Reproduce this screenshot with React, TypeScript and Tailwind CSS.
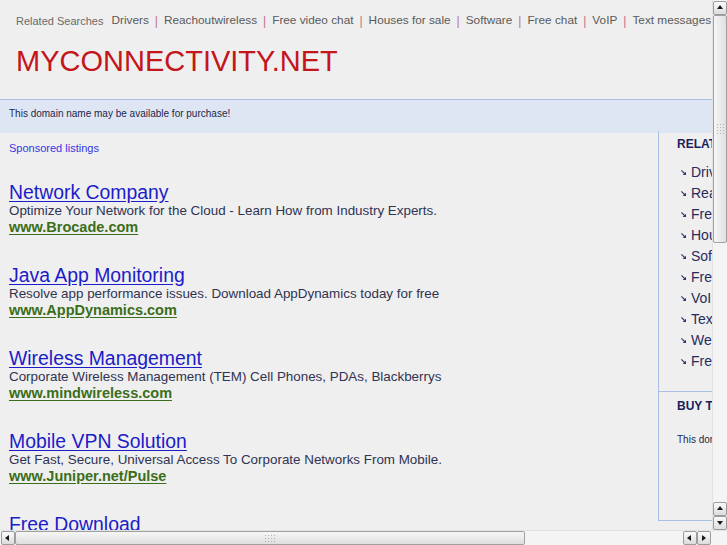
import React from "react";

const related = [
	"Drivers",
	"Reachoutwireless",
	"Free video chat",
	"Houses for sale",
	"Software",
	"Free chat",
	"VoIP",
	"Text messages",
	"Web hosting",
	"Free downloads",
];

const ads = [
	{
		title: "Network Company",
		desc: "Optimize Your Network for the Cloud - Learn How from Industry Experts.",
		url: "www.Brocade.com",
	},
	{
		title: "Java App Monitoring",
		desc: "Resolve app performance issues. Download AppDynamics today for free",
		url: "www.AppDynamics.com",
	},
	{
		title: "Wireless Management",
		desc: "Corporate Wireless Management (TEM) Cell Phones, PDAs, Blackberrys",
		url: "www.mindwireless.com",
	},
	{
		title: "Mobile VPN Solution",
		desc: "Get Fast, Secure, Universal Access To Corporate Networks From Mobile.",
		url: "www.Juniper.net/Pulse",
	},
	{
		title: "Free Download",
		desc: "Download free software for your PC today",
		url: "www.download.com",
	},
];

// little arrow button used by both scrollbars
function ArrowButton({ dir }: { dir: "up" | "down" | "left" | "right" }) {
	const points = {
		up: "2,6 8,6 5,2",
		down: "2,3 8,3 5,7",
		left: "6,2 6,8 2,5",
		right: "3,2 3,8 7,5",
	}[dir];
	return (
		<div className="w-[14px] h-[14px] flex items-center justify-center rounded-[2px] border border-[#9c9c9c] bg-gradient-to-b from-[#fbfbfb] to-[#dcdcdc]">
			<svg width="10" height="10" viewBox="0 0 10 10">
				<polygon points={points} fill="#1a1a1a" />
			</svg>
		</div>
	);
}

function Grip({ vertical }: { vertical: boolean }) {
	const dots = [];
	for (let i = 0; i < 4; i++) {
		for (let j = 0; j < 3; j++) {
			dots.push(
				<span key={`${i}-${j}`} className="w-[1px] h-[1px] bg-[#b0b0b0]" />
			);
		}
	}
	return (
		<div
			className={`grid gap-[2px] ${
				vertical ? "grid-cols-3" : "grid-cols-4 grid-flow-col grid-rows-3"
			}`}
		>
			{dots}
		</div>
	);
}

function BulletArrow() {
	return (
		<svg width="5" height="5" viewBox="0 0 6 6" className="shrink-0">
			<path d="M0.5 0.5 L4.5 4.5" stroke="#2a3470" strokeWidth="1.3" />
			<polygon points="6,2 6,6 2,6" fill="#2a3470" />
		</svg>
	);
}

export default function App() {
	return (
		<div
			className="w-[727px] h-[545px] flex flex-col overflow-hidden bg-[#efefef]"
			style={{ fontFamily: '"Liberation Sans", Arial, sans-serif' }}
		>
			<div className="flex flex-1 min-h-0">
				{/* page */}
				<div className="flex-1 min-w-0 overflow-hidden">
					<div className="w-[900px]">
						{/* header */}
						<div className="h-[100px] border-b border-[#a9bfe6] pl-[16px] pt-[13px]">
							<div className="flex items-center h-[16px] whitespace-nowrap">
								<span className="text-[11px] text-[#6a6a6a] mr-[8px]">
									Related Searches
								</span>
								{related.slice(0, 8).map((r, i) => (
									<span key={r} className="flex items-center">
										{i > 0 && (
											<span className="text-[12px] text-[#c0708c] mx-[6px]">|</span>
										)}
										<span className="text-[11.8px] text-[#5a5a5a]">{r}</span>
									</span>
								))}
							</div>
							<div className="mt-[18px] text-[29px] leading-[29px] text-[#c4151b]">
								MYCONNECTIVITY.NET
							</div>
						</div>

						{/* availability band */}
						<div className="h-[33px] bg-[#dee6f4] pl-[9px] pt-[8px] text-[10px] leading-[12px] text-[#22264a]">
							This domain name may be available for purchase!
						</div>

						<div className="flex">
							{/* listings */}
							<div className="w-[658px] shrink-0 pl-[9px]">
								<div className="pt-[8px] text-[11px] leading-[14px] text-[#3535e6]">
									Sponsored listings
								</div>
								<div className="mt-[27px] flex flex-col gap-[29px]">
									{ads.map((ad) => (
										<div key={ad.title}>
											<div className="text-[19.4px] leading-[20px] text-[#1c1cc8] underline underline-offset-[2px]">
												{ad.title}
											</div>
											<div className="text-[13.4px] leading-[17px] text-[#303352]">
												{ad.desc}
											</div>
											<div className="text-[14.5px] leading-[17px] font-bold text-[#3b6e19] underline underline-offset-[2px]">
												{ad.url}
											</div>
										</div>
									))}
								</div>
							</div>

							{/* right box */}
							<div className="w-[220px] h-[390px] shrink-0 border-l border-b border-r border-[#a9bfe6] -mt-[2px]">
								<div className="pl-[18px] pt-[6px] pb-[19px]">
									<div className="text-[12px] leading-[14px] font-bold text-[#1b1f5c]">
										RELATED SEARCHES
									</div>
									<div className="mt-[11px] flex flex-col">
										{related.map((r) => (
											<div key={r} className="h-[21px] flex items-center gap-[5px] pl-[4px]">
												<BulletArrow />
												<span className="text-[14px] text-[#262b5e]">{r}</span>
											</div>
										))}
									</div>
								</div>
								<div className="border-t border-[#a9bfe6] pl-[18px] pt-[7px]">
									<div className="text-[12px] leading-[14px] font-bold text-[#1b1f5c]">
										BUY THIS DOMAIN
									</div>
									<div className="mt-[21px] text-[10px] leading-[12px] text-[#22264a]">
										This domain may be for sale.
									</div>
								</div>
							</div>
						</div>
					</div>
				</div>

				{/* vertical scrollbar */}
				<div className="w-[15px] shrink-0 flex flex-col items-center bg-[#f4f4f4] border-l border-[#e2e2e2] pt-[1px]">
					<ArrowButton dir="up" />
					<div className="w-[14px] h-[228px] rounded-[2px] border border-[#a0a0a0] bg-gradient-to-r from-[#f6f6f6] to-[#e0e0e0] flex items-center justify-center">
						<Grip vertical />
					</div>
					<div className="flex-1" />
					<ArrowButton dir="up" />
					<ArrowButton dir="down" />
				</div>
			</div>

			{/* horizontal scrollbar */}
			<div className="h-[15px] shrink-0 flex items-center bg-[#f4f4f4] border-t border-[#e2e2e2]">
				<div className="pl-[1px]">
					<ArrowButton dir="left" />
				</div>
				<div className="w-[510px] h-[14px] rounded-[2px] border border-[#a0a0a0] bg-gradient-to-b from-[#f6f6f6] to-[#dedede] flex items-center justify-center">
					<Grip vertical={false} />
				</div>
				<div className="flex-1" />
				<ArrowButton dir="left" />
				<ArrowButton dir="right" />
				<div className="w-[16px]" />
			</div>
		</div>
	);
}
